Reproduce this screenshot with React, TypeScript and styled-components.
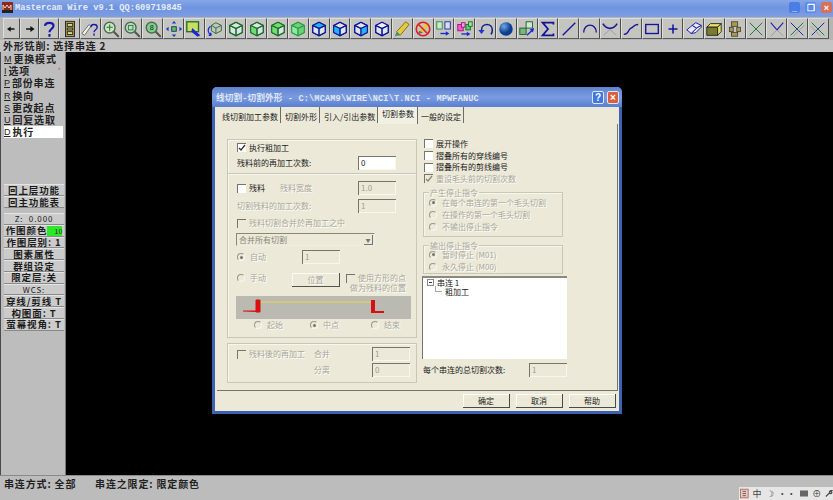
import React from 'react';
import styled, { createGlobalStyle } from 'styled-components';

const CJK = `'Noto Sans CJK SC', 'Liberation Sans', sans-serif`;

const Global = createGlobalStyle`
  html, body { margin: 0; padding: 0; background: #000; }
  * { box-sizing: border-box; }
`;

const Screen = styled.div`
  width: 833px;
  height: 500px;
  display: flex;
  flex-direction: column;
  overflow: hidden;
  background: #bfbfbf;
  font-family: ${CJK};
  color: #1c1c1c;
`;

const TitleBar = styled.div`
  height: 17px;
  display: flex;
  align-items: center;
  padding: 0 1px 2px 2px;
  background: linear-gradient(180deg, #86a6e6 0%, #6f94e0 45%, #7d9de4 100%);
`;

const AppTitle = styled.span`
  margin-left: 2px;
  font-family: 'Liberation Mono', monospace;
  font-size: 8.7px;
  font-weight: 700;
  color: #e6ecf8;
  flex: 1;
`;

const WinBtn = styled.span<{ $bg: string }>`
  width: 11px;
  height: 11px;
  margin-left: 5px;
  border-radius: 2px;
  background: ${(p) => p.$bg};
  color: #fff;
  display: flex;
  align-items: center;
  justify-content: center;
  font: 700 9px 'Liberation Sans', sans-serif;
`;

const Toolbar = styled.div`
  height: 23px;
  display: flex;
  align-items: stretch;
  padding: 1px 0 1px 3px;
  background: #b5b5b3;
`;

const ToolBtn = styled.div<{ $w: number }>`
  width: ${(p) => p.$w}px;
  flex: none;
  display: flex;
  align-items: center;
  justify-content: center;
  background: #c4c4c1;
  border-left: 1px solid #dededc;
  border-top: 1px solid #dcdcda;
  border-right: 1px solid #4e4e4e;
  border-bottom: 1px solid #5a5a5a;
`;

const Prompt = styled.div`
  height: 12px;
  padding-left: 3px;
  display: flex;
  align-items: center;
  font-size: 10px;
  line-height: 12px;
  font-weight: 700;
  letter-spacing: 0.8px;
  color: #222;
  white-space: pre;
  background: #c4c4c4;
`;

const Main = styled.div`
  flex: 1;
  display: flex;
  min-height: 0;
`;

const Sidebar = styled.div`
  width: 66px;
  flex: none;
  display: flex;
  flex-direction: column;
  padding: 1px 2px 0 3px;
  background: #bdbdbd;
  border-left: 1px solid #4a4a4a;
  border-right: 1px solid #777;
`;

const MenuItem = styled.div<{ $active?: boolean }>`
  height: 12.2px;
  display: flex;
  align-items: center;
  font-size: 10px;
  line-height: 12px;
  font-weight: 700;
  letter-spacing: 0.8px;
  white-space: nowrap;
  color: #222;
  background: ${(p) => (p.$active ? '#fff' : 'transparent')};
`;

const Hot = styled.span`
  font-family: 'Liberation Sans', sans-serif;
  font-size: 9px;
  font-weight: 400;
  text-decoration: underline;
  margin-right: 2px;
  letter-spacing: 0;
`;

const MenuDot = styled.span`
  margin-left: auto;
  margin-right: 1px;
  color: #c66;
  font-size: 8px;
  font-weight: 400;
`;

const SideBtn = styled.div<{ $mt?: number; $light?: boolean }>`
  height: 11.8px;
  margin-top: ${(p) => p.$mt ?? 0}px;
  width: 60px;
  display: flex;
  align-items: center;
  justify-content: center;
  font-size: ${(p) => (p.$light ? 8 : 9.5)}px;
  line-height: 11px;
  font-weight: ${(p) => (p.$light ? 400 : 700)};
  letter-spacing: 0.9px;
  white-space: nowrap;
  background: #cbcbcb;
  border-top: 1px solid #e4e4e4;
  border-bottom: 1px solid #8a8a8a;
`;

const Swatch = styled.span`
  width: 15px;
  height: 10px;
  background: #2be82b;
  font-size: 7px;
  font-weight: 400;
  letter-spacing: 0;
  text-align: right;
  line-height: 10px;
`;

const Canvas = styled.div`
  flex: 1;
  position: relative;
  background: #000;
`;

const Dialog = styled.div`
  position: absolute;
  left: 146px;
  top: 35px;
  width: 410px;
  height: 327px;
  display: flex;
  flex-direction: column;
  background: #ece9d8;
  border: 3px solid #3f61b4;
  border-top: 0;
  border-radius: 5px 5px 0 0;
  font-size: 8px;
`;

const DlgTitle = styled.div`
  height: 20px;
  margin: 0 -3px;
  padding: 0 3px 0 4px;
  display: flex;
  align-items: center;
  border-radius: 5px 5px 0 0;
  background: linear-gradient(180deg, #5f83cf 0%, #7a9be0 50%, #5a7fd0 100%);
`;

const DlgCaption = styled.span`
  flex: 1;
  color: #dfe7f6;
  font-family: 'Liberation Mono', 'Noto Sans CJK SC', monospace;
  font-size: 8.6px;
  letter-spacing: 0.15px;
  font-weight: 700;
  white-space: nowrap;
`;

const DlgBtn = styled.span<{ $bg: string }>`
  width: 12px;
  height: 13px;
  margin-left: 3px;
  border-radius: 2px;
  border: 1px solid #dfe7f6;
  background: ${(p) => p.$bg};
  color: #fff;
  display: flex;
  align-items: center;
  justify-content: center;
  font: 700 10px 'Liberation Sans', sans-serif;
`;

const Tabs = styled.div`
  height: 17px;
  display: flex;
  margin-left: 2px;
`;

const Tab = styled.div<{ $w: number; $active?: boolean; $pl?: number }>`
  width: ${(p) => p.$w}px;
  flex: none;
  padding: ${(p) => (p.$active ? '0' : '3px')} 0 0 ${(p) => p.$pl ?? 4}px;
  height: ${(p) => (p.$active ? 17 : 16)}px;
  line-height: 13px;
  white-space: nowrap;
  color: #222;
  border-right: 1px solid #6f6d62;
  background: ${(p) => (p.$active ? '#f2f0e3' : 'transparent')};
`;

const Page = styled.div`
  width: 401px;
  height: 267px;
  margin-left: 2px;
  padding: 15px 0 0 10px;
  display: flex;
  gap: 5px;
  align-items: flex-start;
  border-right: 1px solid #77756a;
  border-bottom: 1px solid #77756a;
`;

const LeftCol = styled.div`
  width: 190px;
  flex: none;
  display: flex;
  flex-direction: column;
`;

const RightCol = styled.div`
  width: 146px;
  flex: none;
  margin-top: -1px;
  display: flex;
  flex-direction: column;
`;

const Group = styled.div<{ $h: number; $mt?: number; $pt?: number }>`
  height: ${(p) => p.$h}px;
  margin-top: ${(p) => p.$mt ?? 0}px;
  padding: ${(p) => p.$pt ?? 0}px 0 0 8px;
  border: 1px solid #c9c7b6;
  box-shadow: inset 1px 1px 0 #f8f7ef;
  display: flex;
  flex-direction: column;
`;

const SmallGroup = styled(Group)`
  position: relative;
  width: 140px;
  margin-left: 1px;
  padding-left: 5px;
`;

const Legend = styled.span`
  position: absolute;
  left: 5px;
  top: -6px;
  padding: 0 1px;
  background: #ece9d8;
  color: #a9a798;
  line-height: 11px;
  text-shadow: 1px 1px 0 #fff;
`;

const Row = styled.div<{ $h?: number; $mt?: number; $pl?: number; $top?: boolean }>`
  height: ${(p) => p.$h ?? 14}px;
  margin-top: ${(p) => p.$mt ?? 0}px;
  padding-left: ${(p) => p.$pl ?? 0}px;
  flex: none;
  display: flex;
  align-items: ${(p) => (p.$top ? 'flex-start' : 'center')};
  white-space: nowrap;
`;

const Label = styled.span<{ $off?: boolean; $w?: number; $ml?: number }>`
  width: ${(p) => (p.$w ? `${p.$w}px` : 'auto')};
  margin-left: ${(p) => p.$ml ?? 0}px;
  flex: none;
  line-height: 10px;
  color: ${(p) => (p.$off ? '#a9a798' : '#222')};
  text-shadow: ${(p) => (p.$off ? '1px 1px 0 #fff' : 'none')};
`;

const Choice = styled.span<{ $w?: number }>`
  width: ${(p) => (p.$w ? `${p.$w}px` : 'auto')};
  flex: none;
  display: inline-flex;
  align-items: center;
  gap: 3px;
`;

const Check = styled.span<{ $off?: boolean }>`
  width: 9px;
  height: 9px;
  flex: none;
  display: inline-flex;
  border-top: 1px solid #77756a;
  border-left: 1px solid #77756a;
  background: ${(p) => (p.$off ? '#ece9d8' : '#fff')};
`;

const Radio = styled.span<{ $on?: boolean }>`
  width: 8px;
  height: 8px;
  flex: none;
  margin-right: 2px;
  border-radius: 50%;
  border: 1px solid #9a9888;
  border-right-color: #f8f7ef;
  border-bottom-color: #f8f7ef;
  display: inline-flex;
  align-items: center;
  justify-content: center;
  &::after {
    content: '';
    width: 3px;
    height: 3px;
    border-radius: 50%;
    background: ${(p) => (p.$on ? '#77756a' : 'transparent')};
  }
`;

const Input = styled.span<{ $w?: number; $off?: boolean; $ml?: number; $mr?: number }>`
  width: ${(p) => p.$w ?? 38}px;
  height: 14px;
  flex: none;
  margin-left: ${(p) => (p.$ml === undefined ? 'auto' : `${p.$ml}px`)};
  margin-right: ${(p) => p.$mr ?? 0}px;
  padding-left: 2px;
  line-height: 12px;
  color: ${(p) => (p.$off ? '#a09e90' : '#222')};
  background: ${(p) => (p.$off ? '#ece9d8' : '#fff')};
  border-top: 1px solid #77756a;
  border-left: 1px solid #77756a;
  box-shadow: inset -1px -1px 0 #f8f7ef;
`;

const Select = styled.div`
  width: 139px;
  height: 13px;
  margin-top: 3px;
  padding-left: 2px;
  display: flex;
  align-items: center;
  justify-content: space-between;
  line-height: 11px;
  color: #8a8878;
  border: 1px solid #8a8878;
  border-right-color: #f0eee2;
  border-bottom-color: #f0eee2;
`;

const SelectArrow = styled.span`
  width: 9px;
  height: 10px;
  margin-right: 1px;
  display: flex;
  align-items: center;
  justify-content: center;
  border-right: 1px solid #77756a;
  border-bottom: 1px solid #77756a;
  color: #77756a;
  font-size: 5px;
`;

const GhostBtn = styled.span`
  width: 48px;
  height: 14px;
  flex: none;
  display: flex;
  align-items: center;
  justify-content: center;
  color: #a9a798;
  text-shadow: 1px 1px 0 #fff;
  border-right: 1px solid #55534a;
  border-bottom: 1px solid #55534a;
  box-shadow: inset 1px 1px 0 #fbfaf3;
`;

const TwoLine = styled.span`
  margin-left: 7px;
  display: flex;
  flex-direction: column;
  align-items: flex-end;
  width: 59px;
  line-height: 10px;
`;

const Strip = styled.div`
  width: 175px;
  height: 23px;
  margin-top: 1px;
  flex: none;
  background: #bbbab2;
`;

const TreeBox = styled.div`
  width: 145px;
  height: 83px;
  margin-top: 2px;
  padding: 0 0 0 4px;
  background: #fff;
  border-top: 2px solid #8c8a7c;
  border-left: 1px solid #77756a;
  color: #1a1a1a;
`;

const TreeRow = styled.div<{ $pl?: number }>`
  height: 9px;
  display: flex;
  align-items: center;
  gap: 3px;
  padding-left: ${(p) => p.$pl ?? 0}px;
  white-space: nowrap;
  line-height: 9px;
`;

const Minus = styled.span`
  width: 7px;
  height: 7px;
  border: 1px solid #8a8a8a;
  position: relative;
  &::after {
    content: '';
    position: absolute;
    left: 1px;
    top: 2px;
    width: 3px;
    height: 1px;
    background: #333;
  }
`;

const Elbow = styled.span`
  width: 7px;
  height: 6px;
  margin-top: -5px;
  border-left: 1px solid #aaa;
  border-bottom: 1px solid #aaa;
`;

const Footer = styled.div`
  height: 14px;
  margin-top: 3px;
  width: 401px;
  display: flex;
  justify-content: flex-end;
  gap: 6px;
`;

const PushBtn = styled.div`
  width: 47px;
  height: 14px;
  display: flex;
  align-items: center;
  justify-content: center;
  color: #222;
  border-right: 1px solid #4a4a40;
  border-bottom: 1px solid #4a4a40;
  box-shadow: inset 1px 1px 0 #fff;
`;

const StatusBar = styled.div`
  height: 25px;
  flex: none;
  display: flex;
  justify-content: space-between;
  background: #bcbcbc;
  border-top: 1px solid #8a8a8a;
`;

const StatusText = styled.div`
  padding: 1px 0 0 4px;
  font-size: 10px;
  font-weight: 700;
  letter-spacing: 0.85px;
  line-height: 14px;
  white-space: pre;
  color: #222;
`;

const Tray = styled.div`
  width: 94px;
  height: 13px;
  align-self: flex-end;
  padding-left: 1px;
  display: flex;
  align-items: center;
  gap: 4px;
  background: #e6e6e6;
  color: #444;
  font-size: 9px;
`;

const Cube = ({ line = '#1f6b2c', top = 'none', left = 'none', right = 'none' }: { line?: string; top?: string; left?: string; right?: string }) => (
  <g stroke={line} strokeWidth="1.2" strokeLinejoin="round">
    <path d="M10 2.5 17 6v8l-7 3.5L3 14V6z" fill="#d8e6e6" />
    <path d="M10 2.5 17 6l-7 3.5L3 6z" fill={top} />
    <path d="M3 6l7 3.5v8L3 14z" fill={left} />
    <path d="M17 6l-7 3.5v8l7-3.5z" fill={right} />
  </g>
);

const Lens = ({ inner, children }: { inner: string; children?: React.ReactNode }) => (
  <g>
    <path d="M12 12l6 6" stroke="#5a5a4a" strokeWidth="2.4" strokeLinecap="round" />
    <circle cx="8.5" cy="8.5" r="6" fill={inner} stroke="#4d6b55" strokeWidth="1.6" />
    {children}
  </g>
);

const Cross = ({ a, b }: { a: string; b: string }) => (
  <g fill="none" strokeWidth="1.1">
    <path d="M3 3l14 14" stroke={a} />
    <path d="M17 3 3 17" stroke={b} />
  </g>
);

const NAVY = '#14149a';

const tools: { w: number; icon: React.ReactNode }[] = [
  { w: 17, icon: <path d="M4 10l5-3.5v2.5h5v2H9v2.5z" fill="#111" /> },
  { w: 19, icon: <path d="M16 10l-5-3.5v2.5H6v2h5v2.5z" fill="#111" /> },
  { w: 20, icon: <path d="M5.5 6.5C6 2 15 2 15 6.5c0 3.5-4.5 3.5-4.5 7M10.5 15.5v3" fill="none" stroke="#1a1aa8" strokeWidth="2.4" /> },
  { w: 21, icon: <g stroke="#222"><rect x="5" y="1.5" width="10" height="17" fill="#a89a4a" /><rect x="7" y="4" width="6" height="3" fill="#e4e0a8" /><rect x="7" y="9" width="6" height="2" fill="#e4e0a8" /><rect x="7" y="13" width="6" height="3" fill="#e4e0a8" /></g> },
  { w: 20.8, icon: <g><path d="M1 15 9 5l2 2-7 10z" fill="#eee" stroke="#666" /><path d="M11 8c0-4 7-4 7 0 0 3-3.5 2.5-3.5 5.5M14.5 15v2.5" fill="none" stroke="#1a1aa8" strokeWidth="1.5" /></g> },
  { w: 20.8, icon: <Lens inner="#cfe6c4"><path d="M5 8h7M8.5 5v7" stroke="#2a7a3a" strokeWidth="1.2" /></Lens> },
  { w: 20.8, icon: <Lens inner="#b8dcc0"><rect x="6" y="6" width="5" height="5" fill="none" stroke="#2a7a3a" /></Lens> },
  { w: 20.8, icon: <Lens inner="#7fd08a"><text x="8.5" y="11.5" fontSize="8" textAnchor="middle" fill="#123" fontFamily="Liberation Sans">8</text></Lens> },
  { w: 20.8, icon: <g><rect x="7.5" y="7.5" width="5" height="5" fill="#5ac85a" stroke="#226" /><path d="M10 1l2.5 3h-5zM10 19l2.5-3h-5zM1 10l3-2.5v5zM19 10l-3-2.5v5z" fill="#1a3ad0" /></g> },
  { w: 20.8, icon: <g><rect x="2" y="2" width="13" height="11" fill="#c8e060" stroke="#2a6a2a" strokeWidth="1.5" /><path d="M8 9l9 8-3 1.5L7 13z" fill="#1a2ad0" /></g> },
  { w: 20.8, icon: <g fill="none"><path d="M11 3l6 3v6l-6 3-5-3V6z" stroke="#1f6b2c" /><path d="M6 6l5 3 6-3M11 9v6" stroke="#1f6b2c" /><path d="M5 7C1 10 2 15 6 17M6 17l-1-3M6 17l-3 0" stroke="#1a2ad0" strokeWidth="1.3" /></g> },
  { w: 20.8, icon: <Cube /> },
  { w: 20.8, icon: <Cube left="#6fe06f" /> },
  { w: 20.8, icon: <Cube top="#6fe06f" left="#6fe06f" /> },
  { w: 20.8, icon: <Cube line="#2f9a45" top="#66d47a" left="#8fe8a0" right="#66d47a" /> },
  { w: 20.8, icon: <Cube line="#14149a" top="#22b4ee" /> },
  { w: 20.8, icon: <Cube line="#14149a" left="#22b4ee" /> },
  { w: 20.8, icon: <Cube line="#14149a" right="#22b4ee" /> },
  { w: 20.8, icon: <Cube line="#14149a" top="#eef" /> },
  { w: 20.8, icon: <g><path d="M4 13 14 2l4 3L8 17z" fill="#e6c83a" stroke="#7a6a20" /><path d="M2 18l2-5 4 4z" fill="#3a9a7a" /></g> },
  { w: 20.8, icon: <g><path d="M6 12 14 3l3 2-7 9z" fill="#e6c83a" /><path d="M4 16l2-4 4 2z" fill="#6a6a5a" /><circle cx="10" cy="10" r="7.5" fill="none" stroke="#e02020" strokeWidth="1.8" /><path d="M5 5l10 10" stroke="#e02020" strokeWidth="1.8" /></g> },
  { w: 20.8, icon: <g fill="none"><rect x="2" y="2" width="6" height="8" stroke="#2a8a3a" fill="#cfe8cf" /><rect x="11" y="2" width="6" height="8" stroke="#1a2aa8" fill="#d8ddee" /><path d="M6 15h7" stroke="#1a2ad0" strokeWidth="1.5" /><path d="M16 15l-4-2.5v5z" fill="#1a2ad0" /></g> },
  { w: 20.8, icon: <g><rect x="2" y="5" width="6" height="7" fill="#f060c0" stroke="#a01080" /><rect x="6" y="3" width="4" height="5" fill="#f8a0e0" stroke="#a01080" /><rect x="11" y="5" width="5" height="6" fill="#60d060" stroke="#1a6a2a" /><rect x="14" y="2" width="4" height="5" fill="#a0e8a0" stroke="#1a6a2a" /><path d="M6 15.5h7" stroke="#1a2ad0" strokeWidth="1.5" /><path d="M16 15.5l-4-2.5v5z" fill="#1a2ad0" /></g> },
  { w: 20.8, icon: <g fill="none"><path d="M5 11c0-8 12-8 12 0 0 2-.5 4-1.5 5" stroke="#1a1a90" strokeWidth="1.7" /><path d="M1.5 11h7L5 15.5z" fill="#1a3ad0" /></g> },
  { w: 20.8, icon: <g><defs><radialGradient id="ball" cx="35%" cy="30%"><stop offset="0" stopColor="#6fa8e8" /><stop offset="1" stopColor="#0a3c90" /></radialGradient></defs><circle cx="10" cy="10" r="7.5" fill="url(#ball)" /></g> },
  { w: 20.8, icon: <g><rect x="2" y="9" width="7" height="7" fill="#7ab87a" stroke="#1a5a2a" /><rect x="9" y="2" width="7" height="7" fill="#cfe8cf" stroke="#1a5a2a" /><path d="M10 17l6-6" stroke="#1a2ad0" strokeWidth="1.5" /><path d="M18 9l-1.5 5-3.5-3.5z" fill="#1a2ad0" /></g> },
  { w: 20.8, icon: <path d="M16 5V3H4l6 7-6 7h12v-2" fill="none" stroke={NAVY} strokeWidth="2" /> },
  { w: 20.8, icon: <path d="M3 17 17 3" stroke={NAVY} strokeWidth="1.5" /> },
  { w: 20.8, icon: <path d="M3 14C3 3 17 3 17 14" fill="none" stroke={NAVY} strokeWidth="1.5" /> },
  { w: 20.8, icon: <g fill="none"><path d="M3 4l14 13M17 4 3 17" stroke="#999" /><path d="M2 4c4 7 12 7 16 0" stroke={NAVY} strokeWidth="1.6" /></g> },
  { w: 20.8, icon: <path d="M2 16c6 0 4-5 8-7s3-4 8-4" fill="none" stroke={NAVY} strokeWidth="1.5" /> },
  { w: 20.8, icon: <rect x="3" y="5" width="14" height="10" fill="none" stroke={NAVY} strokeWidth="1.5" /> },
  { w: 20.8, icon: <path d="M10 5v10M5 10h10" stroke={NAVY} strokeWidth="1.7" /> },
  { w: 20.8, icon: <g fill="#e8e8f4" stroke={NAVY} strokeWidth="1"><path d="M2 11 8 6l5 3-6 6z" /><path d="M8 6l4-3 6 3-5 3z" /><path d="M7 15l6-6 5-3v2l-6 6z" /></g> },
  { w: 20.8, icon: <g stroke="#222"><path d="M2 8l4-4h12l-4 4z" fill="#e8e060" /><path d="M2 8h12v9H2z" fill="#7a7a30" /><path d="M14 8l4-4v9l-4 4z" fill="#e8e060" /></g> },
  { w: 20.8, icon: <g fill="#a89a4a" stroke="#333" strokeWidth=".8"><rect x="6" y="2" width="7" height="5" /><rect x="4" y="8" width="4" height="5" /><rect x="12" y="8" width="4" height="5" /><rect x="6" y="14" width="7" height="4" /></g> },
  { w: 20.8, icon: <Cross a="#1a7a3a" b="#1a7a3a" /> },
  { w: 20.8, icon: <g fill="none"><path d="M3 3l7 8 7-8" stroke="#2222a8" strokeWidth="1.2" /><path d="M10 11l-7 7M10 11l7 7" stroke="#999" /></g> },
  { w: 20.8, icon: <g><Cross a="#2222a8" b="#1a7a3a" /><path d="M6 18 18 6" stroke="#999" /></g> },
  { w: 20.8, icon: <g><Cross a="#1a7a3a" b="#2222a8" /><path d="M2 7l11 11" stroke="#999" /></g> },
];

const menu = [
  ['M', '更换模式'],
  ['I', '选项'],
  ['P', '部份串连'],
  ['R', '换向'],
  ['S', '更改起点'],
  ['U', '回复选取'],
  ['D', '执行'],
];

const Tick = () => (
  <svg width="8" height="8" viewBox="0 0 8 8">
    <path d="M1 4l2 2 4-5" fill="none" stroke="#333" strokeWidth="1.3" />
  </svg>
);

const OffTick = () => (
  <svg width="8" height="8" viewBox="0 0 8 8">
    <path d="M1 4l2 2 4-5" fill="none" stroke="#8a8878" strokeWidth="1.3" />
  </svg>
);

const Tool = () => (
  <svg width="175" height="23" viewBox="0 0 175 23" style={{ display: 'block' }}>
    <path d="M21 6h115" stroke="#e8d84a" />
    <path d="M7 15h13V4h4v12h-4" fill="#d81010" stroke="#d81010" />
    <path d="M135 4h4v11h9v2h-13z" fill="#d81010" />
  </svg>
);

const App: React.FC = () => (
  <Screen>
    <Global />
    <TitleBar>
      <svg width="11" height="11" viewBox="0 0 11 11">
        <rect width="11" height="11" fill="#8a2a1a" />
        <path d="M1 8V3l2 3 2-3 2 3 2-3v5" fill="none" stroke="#f6d0c0" />
        <rect y="8" width="11" height="3" fill="#222" />
      </svg>
      <AppTitle>Mastercam Wire v9.1 QQ:609719845</AppTitle>
      <WinBtn $bg="#4a7ee6">_</WinBtn>
      <WinBtn $bg="#5a8ae8">❐</WinBtn>
      <WinBtn $bg="#d8705a">×</WinBtn>
    </TitleBar>
    <Toolbar>
      {tools.map((t, i) => (
        <ToolBtn key={i} $w={t.w}>
          <svg width="18" height="18" viewBox="0 0 20 20">{t.icon}</svg>
        </ToolBtn>
      ))}
    </Toolbar>
    <Prompt>外形铣削: 选择串连 2</Prompt>
    <Main>
      <Sidebar>
        {menu.map(([k, v], i) => (
          <MenuItem key={k} $active={k === 'D'}>
            <Hot>{k}</Hot>
            {v}
            {i === 1 && <MenuDot>*</MenuDot>}
          </MenuItem>
        ))}
        <SideBtn $mt={46}>回上层功能</SideBtn>
        <SideBtn>回主功能表</SideBtn>
        <SideBtn $mt={5} $light>Z:&nbsp; 0.000</SideBtn>
        <SideBtn>作图颜色<Swatch>10</Swatch></SideBtn>
        <SideBtn>作图层别: 1</SideBtn>
        <SideBtn>图素属性</SideBtn>
        <SideBtn>群组设定</SideBtn>
        <SideBtn>限定层:关</SideBtn>
        <SideBtn $light>WCS:</SideBtn>
        <SideBtn>穿线/剪线 T</SideBtn>
        <SideBtn>构图面: T</SideBtn>
        <SideBtn>萤幕视角: T</SideBtn>
      </Sidebar>
      <Canvas>
        <Dialog>
          <DlgTitle>
            <DlgCaption>线切割-切割外形 - C:\MCAM9\WIRE\NCI\T.NCI - MPWFANUC</DlgCaption>
            <DlgBtn $bg="#3f78e0">?</DlgBtn>
            <DlgBtn $bg="#d8603f">×</DlgBtn>
          </DlgTitle>
          <Tabs>
            <Tab $w={64} $pl={5}>线切割加工参数</Tab>
            <Tab $w={39}>切割外形</Tab>
            <Tab $w={58}>引入/引出参数</Tab>
            <Tab $w={40} $active>切割参数</Tab>
            <Tab $w={46} $pl={3}>一般的设定</Tab>
          </Tabs>
          <Page>
            <LeftCol>
              <Group $h={35}>
                <Row $h={15} $pl={1}>
                  <Choice><Check><Tick /></Check><Label>执行粗加工</Label></Choice>
                </Row>
                <Row $h={15} $pl={1}>
                  <Label>残料前的再加工次数:</Label>
                  <Input $mr={20}>0</Input>
                </Row>
              </Group>
              <Group $h={165} $mt={-1} $pt={7}>
                <Row $pl={1}>
                  <Choice $w={43}><Check /><Label>残料</Label></Choice>
                  <Label $off>残料宽度</Label>
                  <Input $off $mr={20}>1.0</Input>
                </Row>
                <Row $mt={4} $pl={1}>
                  <Label $off>切割残料的加工次数:</Label>
                  <Input $off $mr={20}>1</Input>
                </Row>
                <Row $mt={3} $pl={1}>
                  <Choice><Check $off /><Label $off>残料切割合并於再加工之中</Label></Choice>
                </Row>
                <Select>合并所有切割<SelectArrow>▼</SelectArrow></Select>
                <Row $mt={4} $pl={1}>
                  <Choice $w={65}><Radio $on /><Label $off>自动</Label></Choice>
                  <Input $off $ml={0}>1</Input>
                </Row>
                <Row $h={22} $mt={9} $pl={1} $top>
                  <Choice $w={55}><Radio /><Label $off>手动</Label></Choice>
                  <GhostBtn>位置</GhostBtn>
                  <TwoLine>
                    <Choice><Check $off /><Label $off>使用方形的点</Label></Choice>
                    <Label $off>做为残料的位置</Label>
                  </TwoLine>
                </Row>
                <Strip><Tool /></Strip>
                <Row $h={12} $pl={18}>
                  <Choice $w={56}><Radio /><Label $off>起始</Label></Choice>
                  <Choice $w={61}><Radio $on /><Label $off>中点</Label></Choice>
                  <Choice><Radio /><Label $off>结束</Label></Choice>
                </Row>
              </Group>
              <Group $h={40} $mt={5} $pt={3}>
                <Row $pl={1}>
                  <Choice $w={77}><Check $off /><Label $off>残料後的再加工</Label></Choice>
                  <Label $off $w={58}>合并</Label>
                  <Input $off $ml={0}>1</Input>
                </Row>
                <Row $mt={2} $pl={78}>
                  <Label $off $w={58}>分离</Label>
                  <Input $off $ml={0}>0</Input>
                </Row>
              </Group>
            </LeftCol>
            <RightCol>
              <Row $h={11.7} $pl={2}><Choice><Check /><Label>展开操作</Label></Choice></Row>
              <Row $h={11.7} $pl={2}><Choice><Check /><Label>摺叠所有的穿线编号</Label></Choice></Row>
              <Row $h={11.7} $pl={2}><Choice><Check /><Label>摺叠所有的剪线编号</Label></Choice></Row>
              <Row $h={11.7} $pl={2}><Choice><Check $off><OffTick /></Check><Label $off>重设毛头前的切割次数</Label></Choice></Row>
              <SmallGroup $h={45} $mt={7} $pt={4}>
                <Legend>产生停止指令</Legend>
                <Row $h={12}><Choice><Radio $on /><Label $off>在每个串连的第一个毛头切割</Label></Choice></Row>
                <Row $h={12}><Choice><Radio /><Label $off>在操作的第一个毛头切割</Label></Choice></Row>
                <Row $h={12}><Choice><Radio /><Label $off>不输出停止指令</Label></Choice></Row>
              </SmallGroup>
              <SmallGroup $h={29} $mt={8} $pt={3}>
                <Legend>输出停止指令</Legend>
                <Row $h={12}><Choice><Radio $on /><Label $off>暂时停止 (M01)</Label></Choice></Row>
                <Row $h={12}><Choice><Radio /><Label $off>永久停止 (M00)</Label></Choice></Row>
              </SmallGroup>
              <TreeBox>
                <TreeRow><Minus />串连 1</TreeRow>
                <TreeRow $pl={8}><Elbow />粗加工</TreeRow>
              </TreeBox>
              <Row $mt={4} $pl={1}>
                <Label>每个串连的总切割次数:</Label>
                <Input $off $mr={1}>1</Input>
              </Row>
            </RightCol>
          </Page>
          <Footer>
            <PushBtn>确定</PushBtn>
            <PushBtn>取消</PushBtn>
            <PushBtn>帮助</PushBtn>
          </Footer>
        </Dialog>
      </Canvas>
    </Main>
    <StatusBar>
      <StatusText>串连方式: 全部      串连之限定: 限定颜色</StatusText>
      <Tray>
        <svg width="10" height="11" viewBox="0 0 10 11"><rect x=".5" y=".5" width="9" height="10" fill="#e8c8c0" stroke="#b06a5a" /><path d="M3 3h4M3 5.5h4M3 8h4" stroke="#555" /></svg>
        <span>中</span>
        <span>☽</span>
        <span>··</span>
        <svg width="10" height="7" viewBox="0 0 10 7"><rect width="10" height="7" fill="#666" /></svg>
        <span>⊕</span>
        <svg width="9" height="9" viewBox="0 0 9 9"><path d="M1 8l4-4M5 4c0-3 2-3 3-3L6.5 2.5 8 3c0 2-2 2-3 1" stroke="#444" fill="none" strokeWidth="1.3" /></svg>
      </Tray>
    </StatusBar>
  </Screen>
);

export default App;
